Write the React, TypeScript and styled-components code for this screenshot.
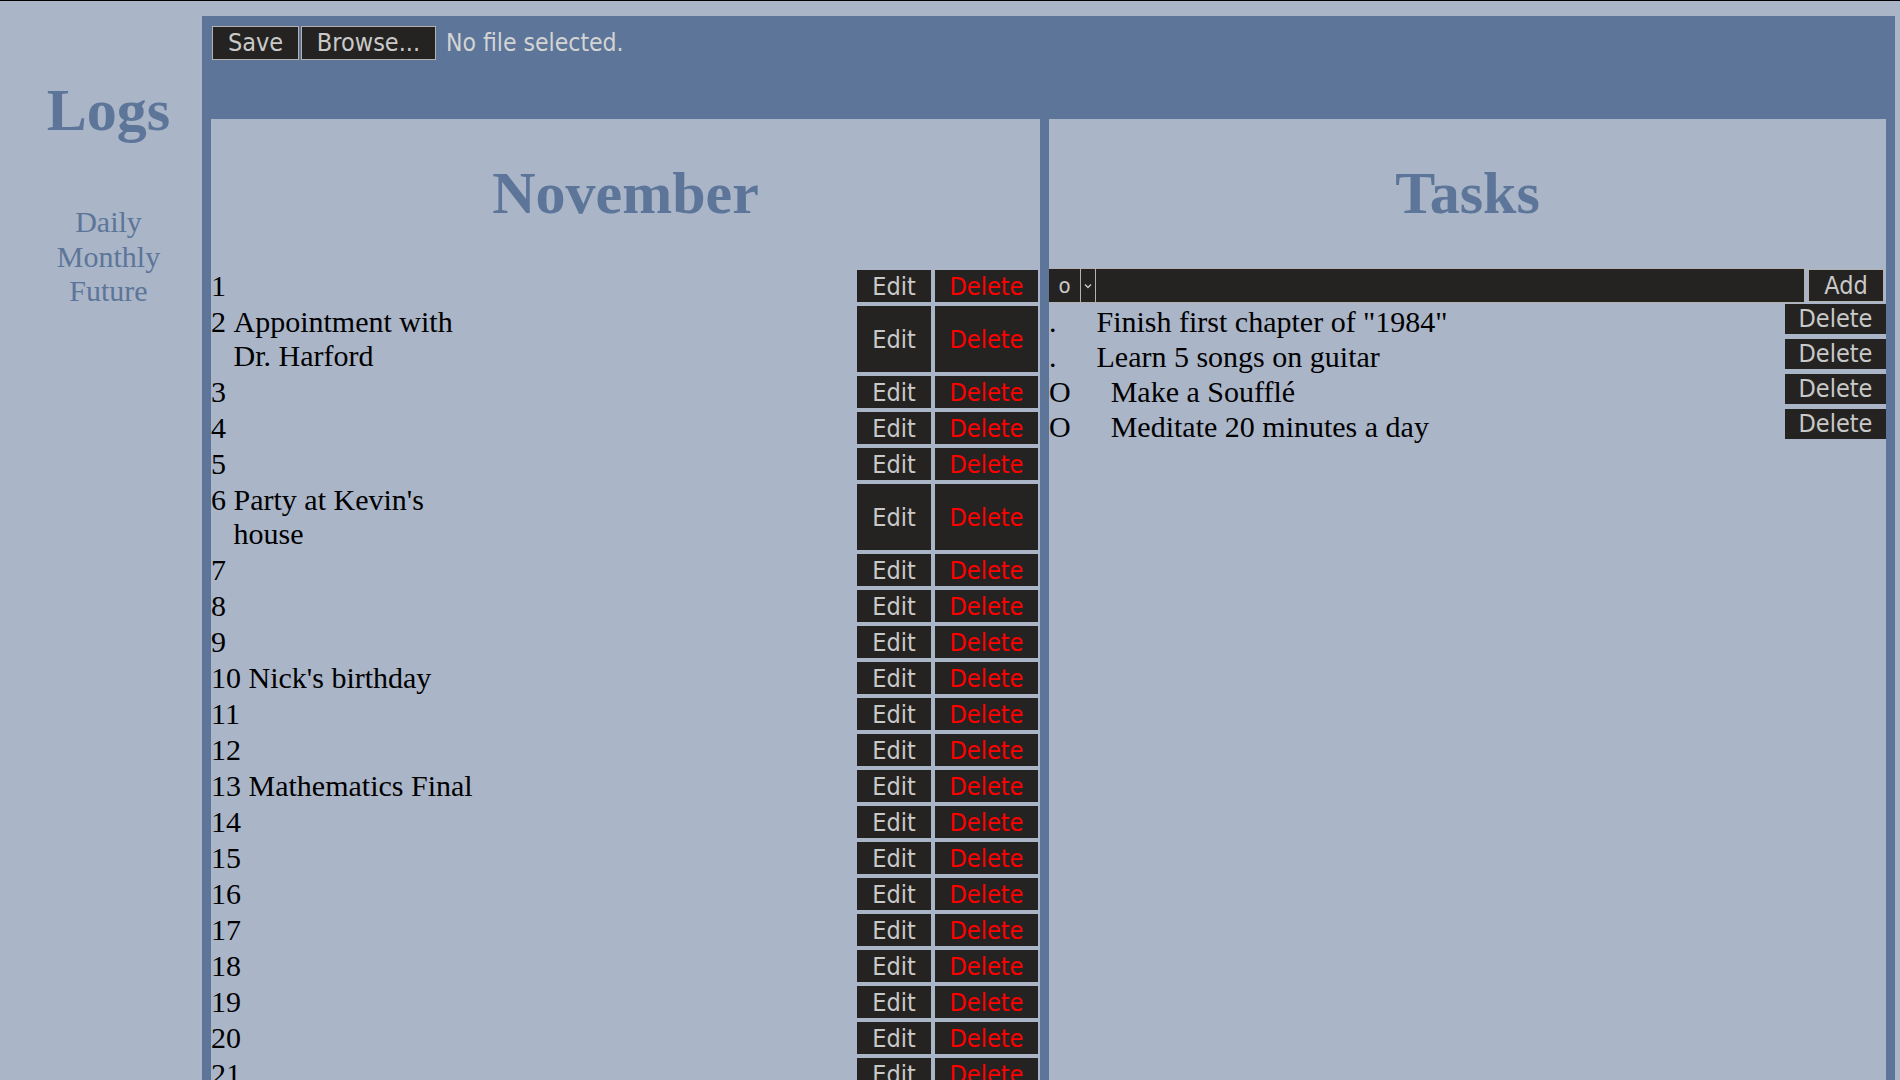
import React from 'react';
import styled, {createGlobalStyle} from 'styled-components';

const colors = {
    page: '#aab5c8',
    frame: '#5c7599',
    button: '#252321',
    buttonText: '#c9c9c9',
    border: '#b4b2ae',
    danger: '#ff0000',
    ink: '#000000',
};

const uiFont = `"DejaVu Sans Condensed", "DejaVu Sans", "Noto Sans", sans-serif`;

const GlobalStyle = createGlobalStyle`
    * {
        box-sizing: border-box;
    }

    body {
        margin: 0;
        border-top: 1px solid #000;
        background: ${colors.page};
        font-family: "Liberation Serif", "Times New Roman", serif;
        font-size: 30px;
        color: ${colors.ink};
        overflow: hidden;
    }
`

type Day = { day: number; text?: string };

const days: Day[] = Array.from({length: 30}, (_, i) => ({day: i + 1}));
days[1].text = 'Appointment with Dr. Harford';
days[5].text = "Party at Kevin's house";
days[9].text = "Nick's birthday";
days[12].text = 'Mathematics Final';

const tasks = [
    {mark: '.', text: 'Finish first chapter of "1984"'},
    {mark: '.', text: 'Learn 5 songs on guitar'},
    {mark: 'O', text: 'Make a Soufflé'},
    {mark: 'O', text: 'Meditate 20 minutes a day'},
];

export default function App() {
    return (
        <>
            <GlobalStyle/>
            <Page>
                <Sidebar>
                    <Logo>Logs</Logo>
                    <Nav>
                        <NavLink href="#">Daily</NavLink>
                        <NavLink href="#">Monthly</NavLink>
                        <NavLink href="#">Future</NavLink>
                    </Nav>
                </Sidebar>

                <Main>
                    <Toolbar>
                        <FrameButton $width={87}>Save</FrameButton>
                        <FrameButton $width={135}>Browse...</FrameButton>
                        <FileLabel>No file selected.</FileLabel>
                    </Toolbar>

                    <Columns>
                        <Panel>
                            <PanelTitle>November</PanelTitle>
                            {days.map(d => (
                                <DayRow key={d.day}>
                                    <DayLabel>
                                        <span>{d.day}</span>
                                        {d.text && <DayText>{d.text}</DayText>}
                                    </DayLabel>
                                    <Actions>
                                        <ActionButton $width={74}>Edit</ActionButton>
                                        <ActionButton $width={103} $danger>Delete</ActionButton>
                                    </Actions>
                                </DayRow>
                            ))}
                        </Panel>

                        <Panel>
                            <PanelTitle>Tasks</PanelTitle>
                            <TaskForm>
                                <SelectBox>
                                    <SelectValue>o</SelectValue>
                                    <SelectArrow>
                                        <svg width="8" height="6" viewBox="0 0 8 6">
                                            <path d="M1 1.5 L4 4.5 L7 1.5" fill="none" stroke="#c9c9c9"
                                                  strokeWidth="1.4"/>
                                        </svg>
                                    </SelectArrow>
                                </SelectBox>
                                <TaskInput/>
                                <FrameButton $width={76}>Add</FrameButton>
                            </TaskForm>
                            {tasks.map(t => (
                                <TaskRow key={t.text}>
                                    <span>
                                        {t.mark}
                                        <TaskText>{t.text}</TaskText>
                                    </span>
                                    <TaskDelete>Delete</TaskDelete>
                                </TaskRow>
                            ))}
                        </Panel>
                    </Columns>
                </Main>
            </Page>
        </>
    );
}

const Page = styled.div`
    display: flex;
    min-height: 100vh;
`

const Sidebar = styled.aside`
    width: 202px;
    flex-shrink: 0;
    padding-left: 15px;
    text-align: center;
`

const Logo = styled.h1`
    margin: 75px 0 0;
    font-size: 60px;
    font-weight: 700;
    color: ${colors.frame};
`

const Nav = styled.nav`
    margin-top: 60px;
    display: flex;
    flex-direction: column;
`

const NavLink = styled.a`
    color: ${colors.frame};
    text-decoration: none;
    font-size: 30px;
    line-height: 34.5px;
`

const Main = styled.main`
    flex: 1;
    margin: 15px 5px 0 0;
    padding: 0 9px;
    background: ${colors.frame};
`

const Toolbar = styled.div`
    height: 103px;
    padding: 10px 1px;
    display: flex;
    align-items: flex-start;
    gap: 2px;
`

const FrameButton = styled.button<{ $width: number }>`
    width: ${p => p.$width}px;
    height: 34px;
    padding: 0;
    border: 1px solid ${colors.border};
    background: ${colors.button};
    color: ${colors.buttonText};
    font-family: ${uiFont};
    font-size: 25px;
    line-height: 30px;
`

const FileLabel = styled.span`
    margin-left: 8px;
    font-family: ${uiFont};
    font-size: 24.5px;
    line-height: 34px;
    color: #d4d4d4;
`

const Columns = styled.div`
    display: grid;
    grid-template-columns: 829fr 837fr;
    gap: 9px;
`

const Panel = styled.section`
    min-height: calc(100vh - 119px);
    background: ${colors.page};
`

const PanelTitle = styled.h1`
    margin: 40px 0;
    text-align: center;
    font-size: 60px;
    font-weight: 700;
    color: ${colors.frame};
`

const DayRow = styled.div`
    display: flex;
    justify-content: space-between;
    padding: 1px 0;
`

const DayLabel = styled.div`
    display: flex;
    gap: 0.25em;
    line-height: 34px;
`

const DayText = styled.span`
    max-width: 240px;
`

const Actions = styled.div`
    display: flex;
    gap: 4px;
    padding: 1px 2px 1px 0;
`

const ActionButton = styled.button<{ $width: number; $danger?: boolean }>`
    width: ${p => p.$width}px;
    padding: 0;
    border: none;
    background: ${colors.button};
    color: ${p => (p.$danger ? colors.danger : colors.buttonText)};
    font-family: ${uiFont};
    font-size: 25px;
`

const TaskForm = styled.div`
    display: flex;
    align-items: flex-start;
    height: 36px;
    padding-right: 2px;
    gap: 3px;

    & > button {
        height: 33px;
        margin-top: 1px;
    }
`

const SelectBox = styled.div`
    display: flex;
    height: 35px;
    border-top: 1px solid ${colors.border};
    border-bottom: 1px solid ${colors.border};
    background: ${colors.button};
`

const SelectValue = styled.span`
    width: 31px;
    text-align: center;
    font-family: ${uiFont};
    font-size: 22px;
    line-height: 33px;
    color: ${colors.buttonText};
`

const SelectArrow = styled.span`
    width: 16px;
    display: flex;
    align-items: center;
    justify-content: center;
    border-left: 1px solid ${colors.border};
    border-right: 1px solid ${colors.border};
`

const TaskInput = styled.input`
    flex: 1;
    height: 35px;
    margin-left: -3px;
    border: 1px solid ${colors.border};
    border-left: none;
    background: ${colors.button};
    color: ${colors.buttonText};
    outline: none;
`

const TaskRow = styled.div`
    display: flex;
    justify-content: space-between;
    align-items: flex-start;
    line-height: 35px;
`

const TaskText = styled.span`
    margin-left: 40px;
`

const TaskDelete = styled.button`
    width: 101px;
    height: 30px;
    padding: 0;
    border: none;
    background: ${colors.button};
    color: ${colors.buttonText};
    font-family: ${uiFont};
    font-size: 25px;
    line-height: 30px;
`
